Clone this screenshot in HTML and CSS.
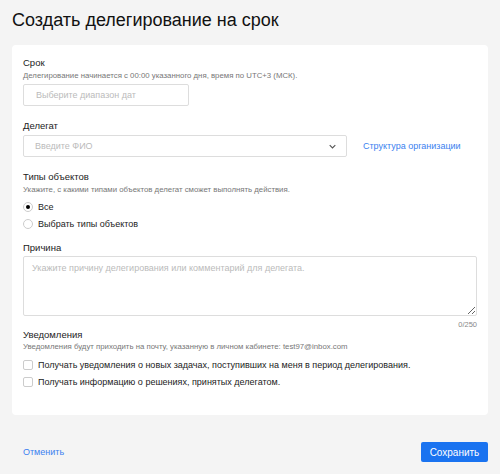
FILE: index.html
```html
<!doctype html>
<html>
  <head>
    <title>Создать делегирование на срок</title>
    <link rel="stylesheet" href="styles.css">
  </head>
  <body>
    <div class="page">
      <h1>Создать делегирование на срок</h1>

      <div class="card">
        <div class="field">
          <div class="label">Срок</div>
          <div class="hint">Делегирование начинается с 00:00 указанного дня, время по UTC+3 (МСК).</div>
          <input type="text" class="input date-input" placeholder="Выберите диапазон дат" />
        </div>

        <div class="field">
          <div class="label">Делегат</div>
          <div class="delegate-row">
            <div class="select">
              <span class="placeholder">Введите ФИО</span>
              <svg class="chevron" width="7" height="5" viewBox="0 0 10 6">
                <path d="M1 1l4 4 4-4" fill="none" stroke="#555" stroke-width="1.6" />
              </svg>
            </div>
            <a class="link" href="#">Структура организации</a>
          </div>
        </div>

        <div class="field types">
          <div class="label">Типы объектов</div>
          <div class="hint">Укажите, с какими типами объектов делегат сможет выполнять действия.</div>
          <label class="option"><span class="radio checked"></span>Все</label>
          <label class="option"><span class="radio"></span>Выбрать типы объектов</label>
        </div>

        <div class="field reason">
          <div class="label">Причина</div>
          <textarea class="textarea" placeholder="Укажите причину делегирования или комментарий для делегата."></textarea>
          <div class="counter">0/250</div>
        </div>

        <div class="field notify">
          <div class="label">Уведомления</div>
          <div class="hint">Уведомления будут приходить на почту, указанную в личном кабинете: test97@inbox.com</div>
          <label class="option"><span class="checkbox"></span>Получать уведомления о новых задачах, поступивших на меня в период делегирования.</label>
          <label class="option"><span class="checkbox"></span>Получать информацию о решениях, принятых делегатом.</label>
        </div>
      </div>

      <div class="footer">
        <a class="link" href="#">Отменить</a>
        <button class="btn-primary">Сохранить</button>
      </div>
    </div>
  </body>
</html>
```

FILE: styles.css
```css
body {
  font-family: "Liberation Sans", Arial, sans-serif;
  margin: 0;
  padding: 0;
  background: #f4f4f4;
  color: #222;
}

.page {
  padding: 0 12px;
}

h1 {
  font-size: 18px;
  font-weight: normal;
  margin: 0;
  padding: 9px 0 0;
  height: 45px;
  box-sizing: border-box;
  line-height: 22px;
  color: #111;
}

.card {
  background: #fff;
  border-radius: 4px;
  padding: 10px 11px 25px;
}

.field {
  margin-bottom: 12px;
}

.label {
  font-size: 9.5px;
  line-height: 15px;
  color: #222;
}

.hint {
  font-size: 7.8px;
  line-height: 12px;
  color: #777;
  margin-bottom: 2px;
}

.input,
.select,
.textarea {
  box-sizing: border-box;
  border: 1px solid #ddd;
  border-radius: 2px;
  background: #fff;
  font-family: inherit;
  font-size: 9px;
  color: #222;
}

.input::placeholder,
.textarea::placeholder {
  color: #bbb;
}

.date-input {
  display: block;
  width: 166px;
  height: 22px;
  padding: 0 12px;
  margin-top: 2px;
  outline: none;
}

.delegate-row {
  display: flex;
  align-items: center;
  gap: 16px;
  margin-top: 2px;
}

.select {
  width: 324px;
  height: 22px;
  display: flex;
  align-items: center;
  justify-content: space-between;
  padding: 0 10px 0 11px;
}

.placeholder {
  color: #bbb;
}

.link {
  color: #3b7ff0;
  font-size: 9px;
  text-decoration: none;
}

.option {
  display: flex;
  align-items: center;
  font-size: 9px;
  height: 17px;
  color: #222;
}

.radio,
.checkbox {
  box-sizing: border-box;
  width: 10px;
  height: 10px;
  border: 1px solid #ccc;
  margin-right: 5px;
  flex-shrink: 0;
}

.radio {
  border-radius: 50%;
  position: relative;
}

.radio.checked::after {
  content: "";
  position: absolute;
  left: 2px;
  top: 2px;
  width: 4px;
  height: 4px;
  border-radius: 50%;
  background: #000;
}

.checkbox {
  border-radius: 2px;
}

.types {
  margin-bottom: 8px;
}

.textarea {
  display: block;
  width: 100%;
  height: 60px;
  margin-top: 1px;
  padding: 6px 8px;
  resize: vertical;
  outline: none;
}

.counter {
  text-align: right;
  font-size: 7.5px;
  line-height: 10px;
  color: #888;
  margin-top: 4px;
}

.reason {
  margin-bottom: -3px;
}

.notify {
  margin-bottom: 0;
}

.notify .hint {
  margin-top: -1px;
  margin-bottom: 3px;
}

.footer {
  display: flex;
  justify-content: space-between;
  align-items: center;
  padding: 27px 0 0 11px;
}

.btn-primary {
  background: #1a73f0;
  color: #fff;
  border: none;
  border-radius: 2px;
  font-family: inherit;
  font-size: 10px;
  width: 67px;
  height: 20px;
}
```
